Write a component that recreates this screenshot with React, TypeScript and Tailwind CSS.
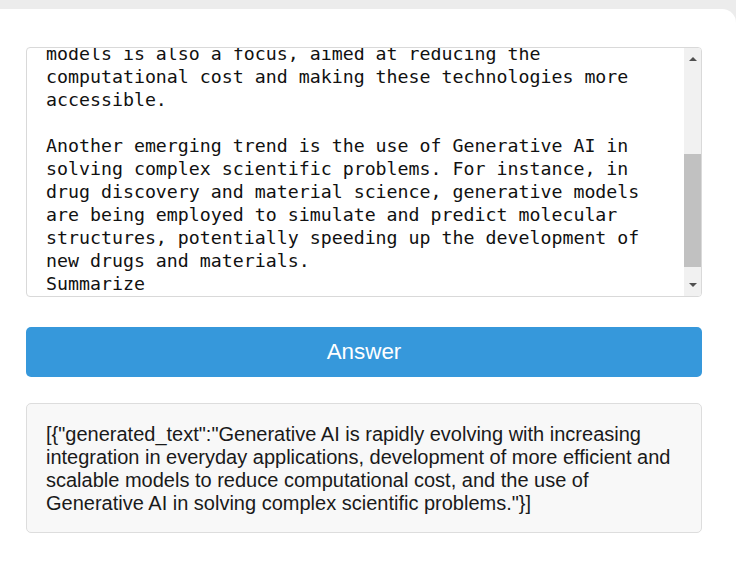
import { useMemo } from 'react';

const promptLines = [
    'models is also a focus, aimed at reducing the',
    'computational cost and making these technologies more',
    'accessible.',
    '',
    'Another emerging trend is the use of Generative AI in',
    'solving complex scientific problems. For instance, in',
    'drug discovery and material science, generative models',
    'are being employed to simulate and predict molecular',
    'structures, potentially speeding up the development of',
    'new drugs and materials.',
    'Summarize',
];

const answer =
    '[{"generated_text":"Generative AI is rapidly evolving with increasing integration in everyday applications, development of more efficient and scalable models to reduce computational cost, and the use of Generative AI in solving complex scientific problems."}]';

function Scrollbar() {
    return (
        <div className="flex w-[17px] shrink-0 flex-col bg-[#f1f1f1]">
            <div className="flex h-[22px] items-center justify-center">
                <div className="h-0 w-0 border-x-[4px] border-b-[4px] border-x-transparent border-b-[#505050]" />
            </div>
            <div className="mt-[84px] h-[113px] bg-[#c1c1c1]" />
            <div className="flex-1" />
            <div className="flex h-[22px] items-center justify-center">
                <div className="h-0 w-0 border-x-[4px] border-t-[4px] border-x-transparent border-t-[#505050]" />
            </div>
        </div>
    );
}

export default function App() {
    const text = useMemo(() => promptLines.join('\n'), []);

    return (
        <div className="min-h-screen overflow-hidden bg-[#ececec] pt-[9px]">
            <div className="min-h-[554px] rounded-tr-[14px] bg-white pl-[26px] pt-[38px]">
                <div className="w-[676px]">
                    {/* prompt box, scrolled to the end */}
                    <div className="flex h-[250px] overflow-hidden rounded-[4px] border border-[#d9d9d9]">
                        <div className="flex-1 overflow-hidden pl-[19px]">
                            <div className="mt-[-6px] whitespace-pre font-['DejaVu_Sans_Mono',monospace] text-[18.25px] leading-[23px] text-[#111]">
                                {text}
                            </div>
                        </div>
                        <Scrollbar />
                    </div>

                    <button className="mt-[30px] flex h-[50px] w-full items-center justify-center rounded-[5px] bg-[#3698db] font-['Liberation_Sans',Arial,sans-serif] text-[22.4px] text-white">
                        Answer
                    </button>

                    <div className="mt-[26px] h-[130px] rounded-[5px] border border-[#dddddd] bg-[#f8f8f8] px-[19px] py-[19px] font-['Liberation_Sans',Arial,sans-serif] text-[20px] leading-[23px] text-[#1a1a1a]">
                        {answer}
                    </div>
                </div>
            </div>
        </div>
    );
}
